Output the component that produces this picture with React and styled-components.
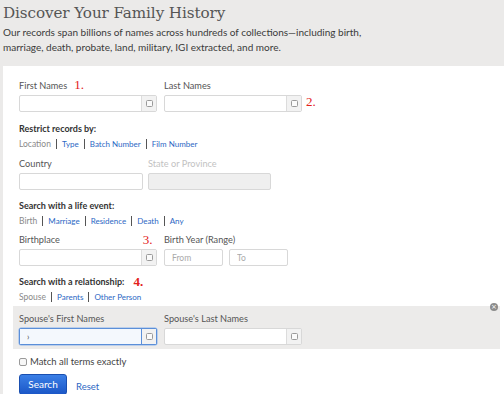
import React from 'react';
import styled, { createGlobalStyle } from 'styled-components';

const GlobalStyle = createGlobalStyle`
  html, body {
    margin: 0;
    padding: 0;
    background: #ebeae9;
    overflow: hidden;
  }
  body {
    font-family: Lato, 'Open Sans', sans-serif;
    color: #444;
  }
`;

const Page = styled.div`
  width: 504px;
  height: 394px;
  padding: 3px 0 0 3px;
  box-sizing: border-box;
  overflow: hidden;
`;

const Title = styled.h1`
  margin: 0;
  font-family: 'DejaVu Serif', serif;
  font-weight: normal;
  font-size: 15.2px;
  line-height: 20px;
  color: #555;
  letter-spacing: -0.1px;
`;

const Intro = styled.p`
  margin: 2px 0 0;
  font-size: 10px;
  line-height: 15px;
  color: #3a3a3a;
`;

const Panel = styled.div`
  margin-top: 11px;
  background: #fff;
  padding: 13px 4px 20px 16px;
  position: relative;
`;

const Row = styled.div`
  display: flex;
  gap: ${p => p.gap || 7}px;
  align-items: flex-end;
`;

const Field = styled.div`
  display: flex;
  flex-direction: column;
  position: relative;
`;

const Label = styled.label`
  font-size: 9.2px;
  line-height: 14px;
  height: 14px;
  color: ${p => (p.muted ? '#c2c2c2' : '#555')};
  margin-bottom: 2px;
  display: flex;
  align-items: center;
`;

const Note = styled.span`
  font-family: 'Liberation Serif', serif;
  color: #e3201b;
  font-size: 13px;
  line-height: 12px;
  margin-left: ${p => p.gap}px;
  margin-bottom: ${p => p.up || 0}px;
`;

const SideNote = styled(Note)`
  align-self: center;
  margin-left: -3px;
  margin-top: 12px;
`;

const InputBox = styled.div`
  display: flex;
  width: ${p => p.w}px;
  height: 17px;
  box-sizing: border-box;
  border: 1px solid ${p => (p.focus ? '#5b8fd9' : '#d8d8d8')};
  border-radius: 2px;
  background: ${p => (p.disabled ? '#efefef' : '#fff')};
  box-shadow: ${p => (p.focus ? '0 0 0 0.5px #8cb3ea' : 'none')};
`;

const TextInput = styled.input`
  flex: 1;
  min-width: 0;
  border: 0;
  outline: none;
  background: ${p => (p.focus ? '#f4f8fd' : 'transparent')};
  font-family: Lato, sans-serif;
  font-size: 8.5px;
  color: #444;
  padding: 0 7px;
  &::placeholder {
    color: #aaa;
  }
`;

const Addon = styled.span`
  width: 14px;
  border-left: 1px solid ${p => (p.focus ? '#5b8fd9' : '#dcdcdc')};
  background: #f2f2f2;
  display: flex;
  align-items: center;
  justify-content: center;
  &::after {
    content: '';
    width: 5px;
    height: 5px;
    border: 1px solid #9a9a9a;
    border-radius: 1.5px;
    background: #fafafa;
  }
`;

const SectionHead = styled.div`
  font-size: 9px;
  font-weight: 700;
  line-height: 12px;
  height: 12px;
  color: #333;
  display: flex;
  align-items: center;
  margin-top: ${p => p.top}px;
`;

const LinkRow = styled.div`
  display: flex;
  align-items: center;
  font-size: 8px;
  line-height: 12px;
  margin-top: 3px;
  margin-bottom: ${p => (p.mb === undefined ? 7 : p.mb)}px;
`;

const Tab = styled.a`
  color: ${p => (p.active ? '#8a8a8a' : '#2c68c4')};
  text-decoration: none;
  font-size: ${p => (p.active ? 8.5 : 8)}px;
`;

const Sep = styled.span`
  display: inline-block;
  width: 1px;
  height: 10px;
  background: #555;
  margin: 0 5px 0 5px;
`;

const Band = styled.div`
  margin: 0 0 0 -6px;
  padding: 6px 6px 4px;
  background: #ecebea;
  position: relative;
`;

const Close = styled.span`
  position: absolute;
  right: 2px;
  top: -3px;
  width: 8px;
  height: 8px;
  border-radius: 50%;
  background: #8c8c8c;
  color: #fff;
  font-size: 7px;
  line-height: 8px;
  text-align: center;
  font-family: 'DejaVu Sans', sans-serif;
`;

const CheckRow = styled.label`
  display: flex;
  align-items: center;
  gap: 3px;
  margin-top: 6px;
  font-size: 9.5px;
  line-height: 14px;
  color: #444;
`;

const Box = styled.span`
  width: 6px;
  height: 6px;
  border: 1px solid #9a9a9a;
  border-radius: 2px;
  background: #f7f7f7;
`;

const Actions = styled.div`
  display: flex;
  align-items: center;
  gap: 9px;
  margin-top: 5px;
`;

const SearchButton = styled.button`
  width: 48px;
  height: 21px;
  border: 1px solid #1a4fb0;
  border-radius: 3px;
  background: linear-gradient(#3b7fe6, #1b57c7);
  color: #fff;
  font-family: Lato, sans-serif;
  font-size: 10px;
  padding: 0 0 2px;
`;

const ResetLink = styled.a`
  color: #2c68c4;
  font-size: 9.5px;
  margin-top: 3px;
`;

function NameInput({ w = 138, focus, value }) {
  return (
    <InputBox w={w} focus={focus}>
      <TextInput focus={focus} defaultValue={value} />
      <Addon focus={focus} />
    </InputBox>
  );
}

function Tabs({ items, mb }) {
  return (
    <LinkRow mb={mb}>
      {items.map((t, i) => (
        <React.Fragment key={t}>
          {i > 0 && <Sep />}
          <Tab active={i === 0}>{t}</Tab>
        </React.Fragment>
      ))}
    </LinkRow>
  );
}

export default function App() {
  return (
    <Page>
      <GlobalStyle />
      <Title>Discover Your Family History</Title>
      <Intro>
        Our records span billions of names across hundreds of collections—including birth,
        <br />
        marriage, death, probate, land, military, IGI extracted, and more.
      </Intro>
      <Panel>
        <Row>
          <Field>
            <Label>
              First Names<Note gap={7} up={3}>1.</Note>
            </Label>
            <NameInput />
          </Field>
          <Field>
            <Label>Last Names</Label>
            <NameInput />
          </Field>
          <SideNote>2.</SideNote>
        </Row>

        <SectionHead top={11}>Restrict records by:</SectionHead>
        <Tabs items={['Location', 'Type', 'Batch Number', 'Film Number']} />
        <Row gap={5}>
          <Field>
            <Label>Country</Label>
            <InputBox w={124}>
              <TextInput />
            </InputBox>
          </Field>
          <Field>
            <Label muted>State or Province</Label>
            <InputBox w={123} disabled>
              <TextInput disabled />
            </InputBox>
          </Field>
        </Row>

        <SectionHead top={10}>Search with a life event:</SectionHead>
        <Tabs items={['Birth', 'Marriage', 'Residence', 'Death', 'Any']} mb={6} />
        <Row>
          <Field>
            <Label>
              Birthplace<Note gap={83}>3.</Note>
            </Label>
            <NameInput />
          </Field>
          <Field>
            <Label>Birth Year (Range)</Label>
            <Row gap={6}>
              <InputBox w={59}>
                <TextInput placeholder="From" />
              </InputBox>
              <InputBox w={59}>
                <TextInput placeholder="To" />
              </InputBox>
            </Row>
          </Field>
        </Row>

        <SectionHead top={10}>
          Search with a relationship:<Note gap={9}>4.</Note>
        </SectionHead>
        <Tabs items={['Spouse', 'Parents', 'Other Person']} mb={3} />
        <Band>
          <Close>×</Close>
          <Row>
            <Field>
              <Label>Spouse's First Names</Label>
              <NameInput focus value="›" />
            </Field>
            <Field>
              <Label>Spouse's Last Names</Label>
              <NameInput />
            </Field>
          </Row>
        </Band>

        <CheckRow>
          <Box />
          Match all terms exactly
        </CheckRow>
        <Actions>
          <SearchButton>Search</SearchButton>
          <ResetLink>Reset</ResetLink>
        </Actions>
      </Panel>
    </Page>
  );
}
